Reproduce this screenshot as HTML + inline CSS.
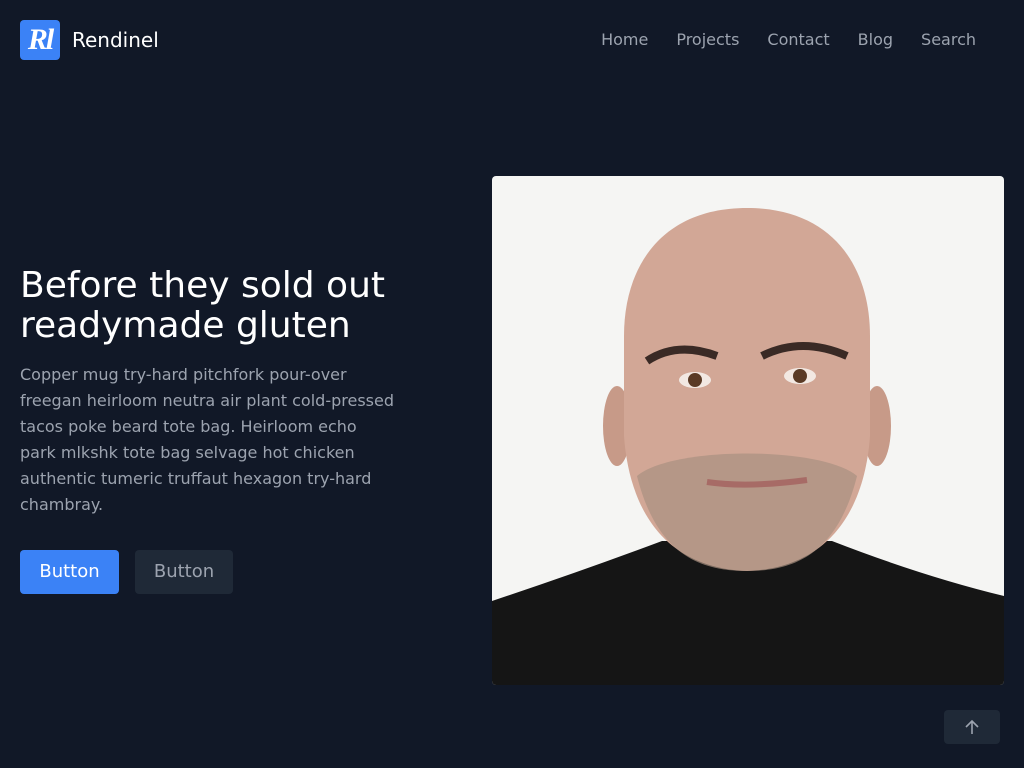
<!DOCTYPE html>
<html><head><meta charset="utf-8"><style>
*{margin:0;padding:0;box-sizing:border-box}
body{width:1024px;height:768px;background:#111827;font-family:"DejaVu Sans","Liberation Sans",sans-serif;position:relative;overflow:hidden}
.logo{position:absolute;left:20px;top:20px;width:40px;height:40px;background:#3b82f6;border-radius:4px;color:#fff;font-family:"Liberation Serif",serif;font-style:italic;font-weight:bold;font-size:30px;line-height:40px;text-align:center;letter-spacing:-2px}
.brand{position:absolute;left:72px;top:28px;color:#fff;font-size:20px}
nav{position:absolute;top:30px;right:48px;display:flex;gap:28px;color:#9ca3af;font-size:16px}
h1{position:absolute;left:20px;top:266px;color:#fff;font-weight:normal;font-size:36px;line-height:40px}
p{position:absolute;left:20px;top:362px;width:376px;color:#9ca3af;font-size:16px;line-height:26px}
.b1{position:absolute;left:20px;top:550px;width:99px;height:44px;background:#3b82f6;color:#fff;border-radius:4px;font-size:18px;line-height:44px;text-align:center}
.b2{position:absolute;left:135px;top:550px;width:98px;height:44px;background:#1f2937;color:#9ca3af;border-radius:4px;font-size:18px;line-height:44px;text-align:center}
.img{position:absolute;left:492px;top:176px;width:512px;height:509px;border-radius:4px;overflow:hidden;background:#f5f5f3}
.up{position:absolute;left:944px;top:710px;width:56px;height:34px;background:#1f2937;border-radius:4px}
</style></head><body>
<div class="logo">Rl</div>
<div class="brand">Rendinel</div>
<nav><span>Home</span><span>Projects</span><span>Contact</span><span>Blog</span><span>Search</span></nav>
<h1>Before they sold out<br>readymade gluten</h1>
<p>Copper mug try-hard pitchfork pour-over freegan heirloom neutra air plant cold-pressed tacos poke beard tote bag. Heirloom echo park mlkshk tote bag selvage hot chicken authentic tumeric truffaut hexagon try-hard chambray.</p>
<div class="b1">Button</div>
<div class="b2">Button</div>
<div class="img"><svg width="512" height="509" viewBox="0 0 512 509">
<path d="M0 425 Q90 395 170 365 L340 365 Q430 400 512 420 L512 509 L0 509Z" fill="#151515"/>
<ellipse cx="125" cy="250" rx="14" ry="40" fill="#c79a88"/>
<ellipse cx="385" cy="250" rx="14" ry="40" fill="#c79a88"/>
<path d="M255 32 C170 32 132 90 132 160 L132 260 C137 330 170 392 255 395 C340 392 373 330 378 260 L378 160 C378 90 340 32 255 32Z" fill="#d2a796"/>
<path d="M145 300 C165 380 210 395 255 395 C300 395 345 380 365 300 C330 270 180 270 145 300Z" fill="#a89080" opacity=".7"/>
<path d="M155 185 Q185 165 225 180" stroke="#3a2a25" stroke-width="8" fill="none"/>
<path d="M270 180 Q310 160 355 180" stroke="#3a2a25" stroke-width="8" fill="none"/>
<ellipse cx="203" cy="204" rx="16" ry="8" fill="#f2e8e2"/><circle cx="203" cy="204" r="7" fill="#5a3a25"/>
<ellipse cx="308" cy="200" rx="16" ry="8" fill="#f2e8e2"/><circle cx="308" cy="200" r="7" fill="#5a3a25"/>
<path d="M215 306 Q255 312 315 304" stroke="#a76b66" stroke-width="6" fill="none"/>
</svg></div>
<div class="up"><svg width="56" height="34" viewBox="0 0 56 34"><path d="M28 24V11M22 17l6-6 6 6" stroke="#9ca3af" stroke-width="1.6" fill="none"/></svg></div>
</body></html>
